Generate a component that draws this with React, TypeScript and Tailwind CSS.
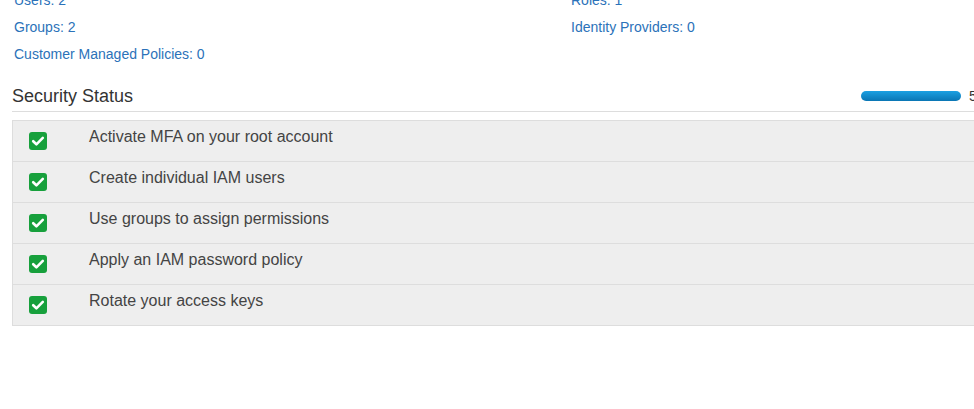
import React from 'react'

const resources = [
  ['Users: 2', 'Roles: 1'],
  ['Groups: 2', 'Identity Providers: 0'],
  ['Customer Managed Policies: 0', ''],
]

const steps = [
  'Activate MFA on your root account',
  'Create individual IAM users',
  'Use groups to assign permissions',
  'Apply an IAM password policy',
  'Rotate your access keys',
]

function CheckBox() {
  return (
    <svg width="18" height="18" viewBox="0 0 18 18" className="block">
      <rect x="0" y="0" width="18" height="18" rx="3" fill="#17a03c" />
      <path
        d="M4.2 9.2 L7.4 12.3 L13.8 5.9"
        fill="none"
        stroke="#ffffff"
        strokeWidth="2.6"
        strokeLinecap="round"
        strokeLinejoin="round"
      />
    </svg>
  )
}

export default function App() {
  return (
    <div
      className="h-[409px] w-full overflow-hidden bg-white"
      style={{ fontFamily: '"Liberation Sans", Arial, sans-serif' }}
    >
      <div className="w-[1200px] px-3 -mt-[13px]">
        {/* Resource counts */}
        <div className="pl-[2px]">
          {resources.map(([left, right], i) => (
            <div key={i} className="grid grid-cols-[557px_1fr] text-[14px] leading-[27px] text-[#2b72b9]">
              <span>{left}</span>
              <span>{right}</span>
            </div>
          ))}
        </div>

        {/* Security status header */}
        <div className="mt-[16px] flex items-center border-b border-[#dddddd] pb-[3px]">
          <h2 className="w-[849px] text-[18px] leading-[24px] text-[#333333]">Security Status</h2>
          <div className="h-[10px] w-[100px] rounded-[5px] bg-gradient-to-b from-[#1ba0e2] to-[#0a76b4]" />
          <span className="ml-2 text-[14px] text-[#333333]">5 out of 5 complete.</span>
        </div>

        {/* Checklist */}
        <div className="mt-2 border-l border-t border-[#dddddd] bg-[#eeeeee]">
          {steps.map((s) => (
            <div key={s} className="flex h-[41px] items-start border-b border-[#dddddd]">
              <div className="ml-4 mt-[11px] w-[18px]">
                <CheckBox />
              </div>
              <span className="ml-[42px] pt-[6px] text-[16px] leading-[20px] text-[#444444]">{s}</span>
            </div>
          ))}
        </div>
      </div>
    </div>
  )
}
